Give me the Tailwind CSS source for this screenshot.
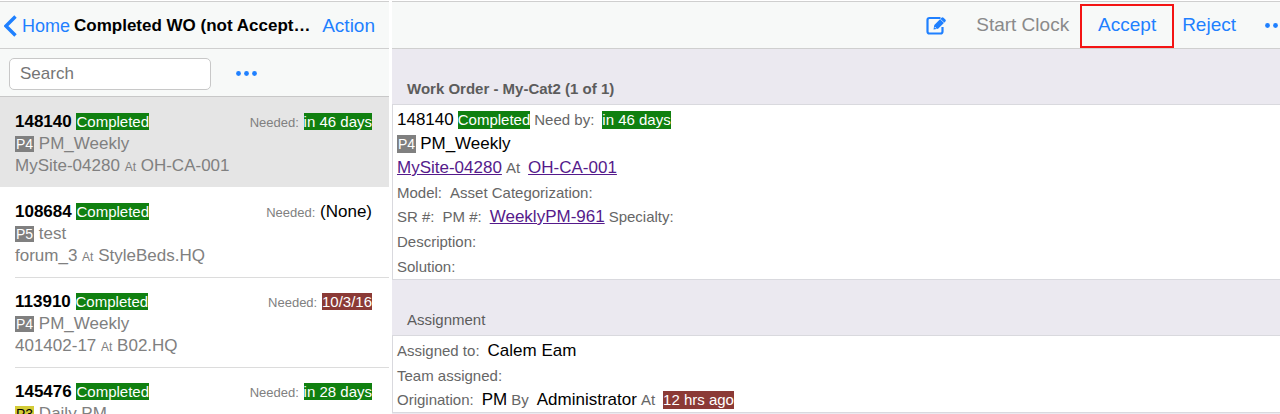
<!DOCTYPE html>
<html lang="en">
<head>
    <meta charset="UTF-8">
    <meta name="viewport" content="width=device-width, initial-scale=1.0">
    <title>Work Orders</title>
    <script src="https://cdn.jsdelivr.net/npm/@tailwindcss/browser@4"></script>
</head>

<body class="h-screen flex gap-[3px] overflow-hidden bg-white font-['Liberation_Sans',Arial,sans-serif] text-[17px] text-black">
    <!-- Work order list -->
    <aside class="w-[389px] shrink-0 flex flex-col overflow-hidden">
        <header class="h-12 mt-px shrink-0 flex items-center pt-[2px] pl-1 pr-[14px] bg-[#f7f9f8] border-y border-[#cfcfcf]">
            <a href="#" class="flex items-center gap-1 text-[18px] text-[#1f80ff]">
                <svg class="w-[14px] h-[22px]" viewBox="0 0 14 22" fill="none" stroke="currentColor" stroke-width="3.4">
                    <path d="M11.5 1.5 2 11l9.5 9.5" />
                </svg>
                <span>Home</span>
            </a>
            <h1 class="ml-1 grow text-[17px] font-bold whitespace-nowrap">Completed WO (not Accept…</h1>
            <button type="button" class="text-[19px] text-[#1f80ff]">Action</button>
        </header>

        <div class="h-12 shrink-0 flex items-center pt-[2px] px-[9px] bg-[#f7f9f8] border-b border-[#c8c8c8]">
            <input type="search" placeholder="Search" aria-label="Search"
                class="w-[202px] h-8 px-[10px] rounded-[5px] border border-[#c8c8c8] bg-white text-[17px] placeholder:text-[#757575]">
            <button type="button" aria-label="More" class="ml-[25px] text-[#1f80ff]">
                <svg class="w-[21px] h-[5px]" viewBox="0 0 21 5" fill="currentColor">
                    <circle cx="2.5" cy="2.5" r="2.4" />
                    <circle cx="10.5" cy="2.5" r="2.4" />
                    <circle cx="18.5" cy="2.5" r="2.4" />
                </svg>
            </button>
        </div>

        <ul class="leading-[21px] text-[#808080]">
            <li class="h-[90px] pt-[14px] pl-[15px] bg-[#e5e5e5]">
                <div class="flex justify-between pr-[17px]">
                    <div><b class="text-black">148140</b> <span class="bg-[#108010] text-[15px] text-white">Completed</span></div>
                    <div><span class="text-[13px]">Needed:</span> <span class="bg-[#108010] text-[15px] text-white">in 46 days</span></div>
                </div>
                <div><span class="bg-[#808080] px-px text-[14px] text-white">P4</span> PM_Weekly</div>
                <div>MySite-04280 <span class="text-[12px]">At</span> OH-CA-001</div>
            </li>
            <li class="h-[90px] pl-[15px]">
                <div class="h-[91px] pt-[14px] border-b border-[#dcdcdc]">
                    <div class="flex justify-between pr-[17px]">
                        <div><b class="text-black">108684</b> <span class="bg-[#108010] text-[15px] text-white">Completed</span></div>
                        <div><span class="text-[13px]">Needed:</span> <span class="text-black">(None)</span></div>
                    </div>
                    <div><span class="bg-[#808080] px-px text-[14px] text-white">P5</span> test</div>
                    <div>forum_3 <span class="text-[12px]">At</span> StyleBeds.HQ</div>
                </div>
            </li>
            <li class="h-[90px] pl-[15px]">
                <div class="h-[91px] pt-[14px] border-b border-[#dcdcdc]">
                    <div class="flex justify-between pr-[17px]">
                        <div><b class="text-black">113910</b> <span class="bg-[#108010] text-[15px] text-white">Completed</span></div>
                        <div><span class="text-[13px]">Needed:</span> <span class="bg-[#8b3a36] text-[15px] text-white">10/3/16</span></div>
                    </div>
                    <div><span class="bg-[#808080] px-px text-[14px] text-white">P4</span> PM_Weekly</div>
                    <div>401402-17 <span class="text-[12px]">At</span> B02.HQ</div>
                </div>
            </li>
            <li class="h-[90px] pt-[14px] pl-[15px]">
                <div class="flex justify-between pr-[17px]">
                    <div><b class="text-black">145476</b> <span class="bg-[#108010] text-[15px] text-white">Completed</span></div>
                    <div><span class="text-[13px]">Needed:</span> <span class="bg-[#108010] text-[15px] text-white">in 28 days</span></div>
                </div>
                <div><span class="bg-[#d3cb37] px-px text-[14px] text-black">P3</span> Daily PM</div>
            </li>
        </ul>
    </aside>

    <!-- Work order detail -->
    <main class="grow min-w-0 flex flex-col bg-[#ebe9f0]">
        <div class="h-px shrink-0 bg-white"></div>
        <header class="h-12 shrink-0 flex items-center justify-end overflow-hidden pt-px bg-[#f7f9f8] border-y border-[#cfcfcf] text-[19px] text-[#1f80ff]">
            <button type="button" aria-label="Edit" class="mr-[29px]">
                <svg class="w-[21px] h-[19px]" viewBox="0 0 21 19" fill="none" stroke="currentColor">
                    <path d="M14.5 2H3.5Q1.5 2 1.5 4v11.5q0 2 2 2h11q2 0 2-2V11" stroke-width="2.2" />
                    <path d="M7.5 13.5 8.3 9 15.5 1.8q1-1 2 0l1.9 1.8q1 1 0 2L12.1 12.8z" fill="currentColor" stroke="none" />
                    <path d="M14.2 3 18.3 7" stroke="#f7f9f8" stroke-width=".7" />
                    <path d="m8.7 11 1.5 1.5" stroke="#f7f9f8" stroke-width="1" />
                </svg>
            </button>
            <button type="button" disabled class="mr-[11px] text-[#8a8a8a]">Start Clock</button>
            <button type="button" class="w-[94px] h-11 border-2 border-[#f41414]">Accept</button>
            <button type="button" class="ml-2">Reject</button>
            <button type="button" aria-label="More" class="ml-[29px] -mr-[6px]">
                <svg class="w-[21px] h-[5px]" viewBox="0 0 21 5" fill="currentColor">
                    <circle cx="2.5" cy="2.5" r="2.4" />
                    <circle cx="10.5" cy="2.5" r="2.4" />
                    <circle cx="18.5" cy="2.5" r="2.4" />
                </svg>
            </button>
        </header>

        <h2 class="h-[55px] shrink-0 flex items-end pl-[15px] pb-1 text-[15px] font-bold text-[#5c5c5c]">Work Order - My-Cat2 (1 of 1)</h2>
        <section class="shrink-0 pt-[3px] pl-1 bg-white border border-r-0 border-[#d9d9de] text-[15px] leading-[18px] text-[#666]">
            <div class="h-6 flex items-center gap-1">
                <span class="text-[17px] text-black">148140</span>
                <span class="bg-[#108010] text-white">Completed</span>
                <span>Need by:</span>
                <span class="ml-1 bg-[#108010] text-white">in 46 days</span>
            </div>
            <div class="h-6 flex items-center gap-1">
                <span class="bg-[#808080] px-px text-[14px] text-white">P4</span>
                <span class="text-[17px] text-black">PM_Weekly</span>
            </div>
            <div class="h-6 flex items-center gap-1">
                <a href="#" class="text-[17px] text-[#551a8b] underline">MySite-04280</a>
                <span>At</span>
                <a href="#" class="ml-1 text-[17px] text-[#551a8b] underline">OH-CA-001</a>
            </div>
            <div class="h-[25px] flex items-center gap-2">
                <span>Model:</span>
                <span>Asset Categorization:</span>
            </div>
            <div class="h-6 flex items-center gap-1">
                <span>SR #:</span>
                <span class="ml-1">PM #:</span>
                <a href="#" class="ml-1 text-[17px] text-[#551a8b] underline">WeeklyPM-961</a>
                <span>Specialty:</span>
            </div>
            <div class="h-[25px] flex items-center">Description:</div>
            <div class="h-[25px] flex items-center">Solution:</div>
        </section>

        <h2 class="h-[55px] shrink-0 flex items-end pl-[15px] pb-1 text-[15px] text-[#5c5c5c]">Assignment</h2>
        <section class="shrink-0 pt-[3px] pl-1 bg-white border border-r-0 border-[#d9d9de] text-[15px] leading-[18px] text-[#666]">
            <div class="h-6 flex items-center gap-1">
                <span>Assigned to:</span>
                <span class="ml-1 text-[17px] text-black">Calem Eam</span>
            </div>
            <div class="h-[25px] flex items-center">Team assigned:</div>
            <div class="h-6 flex items-center gap-1">
                <span>Origination:</span>
                <span class="ml-1 text-[17px] text-black">PM</span>
                <span>By</span>
                <span class="ml-1 text-[17px] text-black">Administrator</span>
                <span>At</span>
                <span class="ml-1 bg-[#8b3a36] text-white">12 hrs ago</span>
            </div>
        </section>
    </main>
</body>

</html>
